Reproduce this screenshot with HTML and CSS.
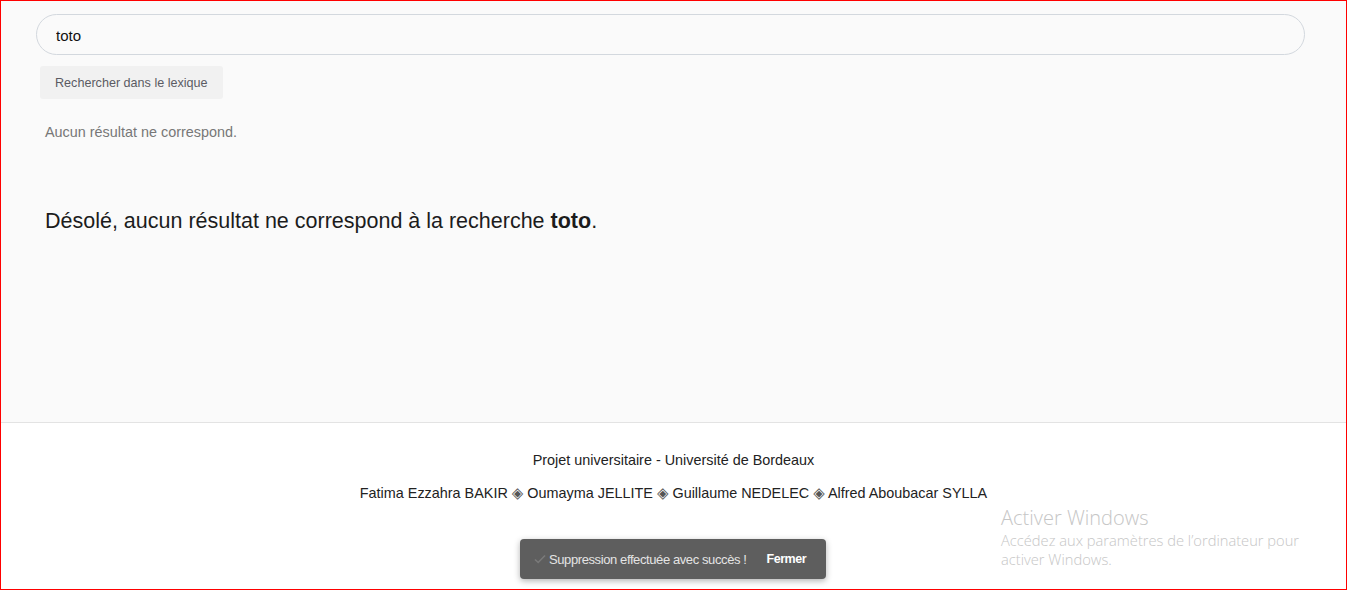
FILE: index.html
```html
<!DOCTYPE html>
<html lang="fr">
<head>
<meta charset="utf-8">
<title>Lexique</title>
<link rel="stylesheet" href="styles.css">
</head>
<body>
<div class="frame">
  <main class="main">
    <div class="search">
      <input class="search-input" type="text" value="toto">
    </div>
    <button class="search-btn" type="button">Rechercher dans le lexique</button>
    <p class="hint">Aucun résultat ne correspond.</p>
    <h2 class="sorry">Désolé, aucun résultat ne correspond à la recherche <strong>toto</strong>.</h2>
  </main>
  <footer class="footer">
    <p class="footer-line">Projet universitaire - Université de Bordeaux</p>
    <p class="footer-line authors">Fatima Ezzahra BAKIR <span class="sep">◈</span> Oumayma JELLITE <span class="sep">◈</span> Guillaume NEDELEC <span class="sep">◈</span> Alfred Aboubacar SYLLA</p>
  </footer>
  <div class="toast">
    <span class="toast-msg"><svg class="check" width="12" height="10" viewBox="0 0 12 10"><path d="M1 5.5 L4.2 8.5 L11 1.5" fill="none" stroke="#7a7a7a" stroke-width="1.6"/></svg>Suppression effectuée avec succès !</span>
    <span class="toast-close">Fermer</span>
  </div>
  <div class="watermark">
    <div class="wm-title">Activer Windows</div>
    <div class="wm-text">Accédez aux paramètres de l’ordinateur pour<br>activer Windows.</div>
  </div>
</div>
</body>
</html>
```
FILE: styles.css
```css
* { box-sizing: border-box; }
html, body { margin: 0; padding: 0; height: 100%; }
body {
  font-family: "Liberation Sans", Arial, sans-serif;
  color: #222;
  background: #fff;
}
.frame {
  position: relative;
  height: 590px;
  border: 1px solid #ff0000;
  display: flex;
  flex-direction: column;
  overflow: hidden;
}
.main {
  background: #fafafa;
  height: 422px;
  padding: 13px 41px 0 35px;
  border-bottom: 1px solid #e3e3e3;
  flex: none;
}
.search-input {
  display: block;
  width: 100%;
  height: 41px;
  border: 1px solid #d3d8de;
  border-radius: 21px;
  background: #fafafa;
  padding: 2px 19px 0;
  font-family: "Liberation Sans", Arial, sans-serif;
  font-size: 15px;
  color: #111;
  outline: none;
}
.search-btn {
  display: block;
  margin: 11px 0 0 4px;
  height: 33px;
  padding: 0 15px;
  border: none;
  border-radius: 3px;
  background: #f1f1f1;
  font-family: "Liberation Sans", Arial, sans-serif;
  font-size: 12.6px;
  color: #5b5b63;
}
.hint {
  margin: 25px 0 0 9px;
  font-size: 14.4px;
  color: #777;
  line-height: 16px;
}
.sorry {
  margin: 68px 0 0 9px;
  font-size: 21.5px;
  font-weight: normal;
  color: #1c1c1c;
  line-height: 26px;
}
.sorry strong { font-weight: bold; }
.footer {
  flex: 1;
  background: #fff;
  padding-top: 29px;
  text-align: center;
}
.footer-line {
  margin: 0;
  font-size: 14.4px;
  line-height: 16px;
  color: #222;
}
.authors { margin-top: 17px; }
.sep { color: #555; font-size: 15px; line-height: 16px; font-family: "DejaVu Sans", sans-serif; }
.toast {
  position: absolute;
  left: 519px;
  bottom: 10px;
  width: 306px;
  height: 40px;
  background: #5e5e5e;
  border-radius: 4px;
  box-shadow: 0 2px 6px rgba(0,0,0,0.3);
  display: flex;
  align-items: center;
  padding: 0 20px 0 14px;
  font-size: 13px;
  letter-spacing: -0.4px;
}
.toast-msg { color: #e4e4e4; display: flex; align-items: center; }
.check { margin-right: 3px; }
.toast-close { margin-left: auto; color: #fff; font-weight: bold; font-size: 12.5px; letter-spacing: -0.5px; }
.watermark {
  position: absolute;
  left: 1000px;
  top: 503px;
  color: #c6c6c6;
  font-family: "Open Sans", "Noto Sans", sans-serif;
  font-weight: 300;
}
.wm-title { font-size: 20px; line-height: 27px; }
.wm-text { font-size: 14.7px; line-height: 19px; }
```
